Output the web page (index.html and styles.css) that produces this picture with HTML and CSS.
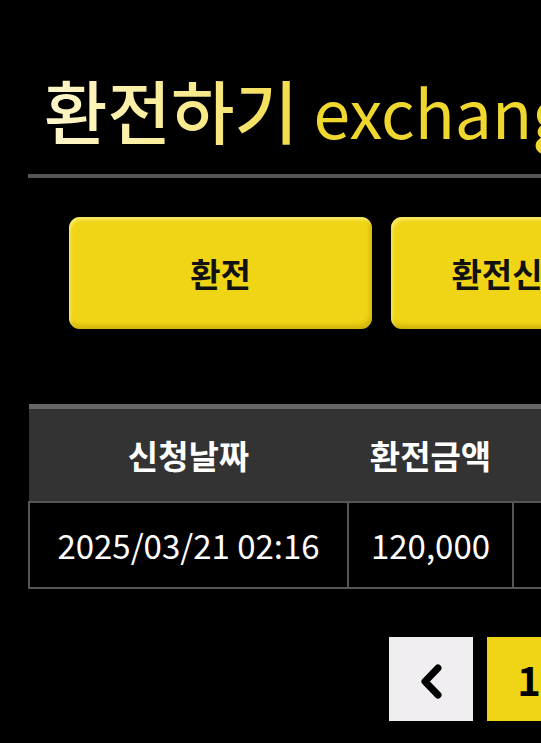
FILE: index.html
```html
<!DOCTYPE html>
<html>
<head>
<meta charset="UTF-8">
<title>환전하기</title>
<link rel="stylesheet" href="styles.css">
</head>
<body>
  <div class="page">
    <h1 class="page-title"><span class="title-ko">환전하기</span> <span class="title-en">exchange</span></h1>

    <div class="tab-row">
      <button class="tab-button">환전</button>
      <button class="tab-button">환전신청내역</button>
      <button class="tab-button">출금</button>
    </div>

    <table class="history-table">
      <thead>
        <tr>
          <th class="col-date">신청날짜</th>
          <th class="col-amount">환전금액</th>
          <th class="col-status">처리상태</th>
        </tr>
      </thead>
      <tbody>
        <tr>
          <td>2025/03/21 02:16</td>
          <td>120,000</td>
          <td>대기중</td>
        </tr>
      </tbody>
    </table>

    <div class="pager">
      <a class="pager-item prev" href="#">
        <svg width="34" height="48" viewBox="0 0 34 48"><path d="M24 13 L11 26.5 L24 40" fill="none" stroke="#000" stroke-width="7" stroke-linecap="round" stroke-linejoin="round"/></svg>
      </a>
      <a class="pager-item active" href="#">1</a>
      <a class="pager-item next" href="#">
        <svg width="34" height="48" viewBox="0 0 34 48"><path d="M10 13 L23 26.5 L10 40" fill="none" stroke="#000" stroke-width="7" stroke-linecap="round" stroke-linejoin="round"/></svg>
      </a>
    </div>
  </div>
</body>
</html>
```

FILE: styles.css
```css
html, body {
  margin: 0;
  background-color: #000;
  overflow: hidden;
}
body {
  font-family: "Noto Sans CJK KR", "Noto Sans", sans-serif;
  color: #fff;
}
.page {
  width: 1002px;
  padding: 0 0 40px 28px;
}

/* 제목 */
.page-title {
  margin: 0;
  padding: 61px 0 0 16px;
  height: 113px;
  font-weight: 500;
  font-size: 69px;
  line-height: 96px;
  white-space: nowrap;
  border-bottom: 4px solid #555;
  box-sizing: content-box;
}
.title-ko {
  background: linear-gradient(90deg, #fff6cc 0%, #f8ea8c 60%, #f2dc48 100%);
  -webkit-background-clip: text;
  background-clip: text;
  color: transparent;
}
.title-en {
  color: #f0d72e;
  font-weight: 400;
  font-size: 66px;
}

/* 탭 버튼 */
.tab-row {
  display: flex;
  gap: 19px;
  padding: 39px 41px 0;
}
.tab-button {
  flex-shrink: 0;
  width: 303px;
  height: 112px;
  border: none;
  border-radius: 11px;
  background-color: #f0d516;
  box-shadow: inset 2px 3px 3px rgba(255, 245, 150, 0.6), inset -2px -4px 5px rgba(170, 140, 0, 0.45);
  font-family: inherit;
  font-size: 33px;
  font-weight: 700;
  color: #111;
  cursor: pointer;
}

/* 신청 내역 테이블 */
.history-table {
  margin-top: 75px;
  border-collapse: collapse;
  border-top: 5px solid #666;
  table-layout: fixed;
  width: 974px;
}
.history-table th {
  height: 92px;
  background-color: #333;
  font-size: 33px;
  font-weight: 700;
  color: #fff;
  padding: 0;
}
.history-table td {
  height: 84px;
  border: 2px solid #555;
  text-align: center;
  font-size: 33px;
  padding: 0;
}
.col-date { width: 319px; }
.col-amount { width: 165px; }

/* 페이지 이동 */
.pager {
  display: flex;
  justify-content: center;
  gap: 14px;
  margin-top: 48px;
}
.pager-item {
  flex-shrink: 0;
  width: 84px;
  height: 84px;
  display: flex;
  align-items: center;
  justify-content: center;
  background-color: #f0eef0;
  color: #000;
  text-decoration: none;
  font-size: 40px;
  font-weight: 700;
}
.pager-item.active {
  background-color: #f0d516;
}
```
